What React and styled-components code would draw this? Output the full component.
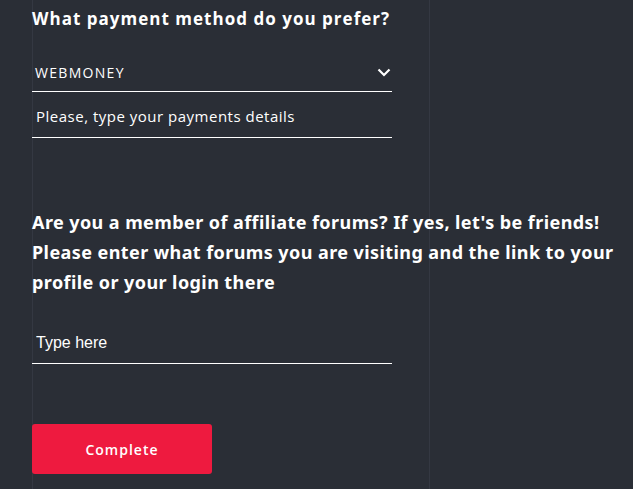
import React from "react";
import styled, { createGlobalStyle } from "styled-components";

const Global = createGlobalStyle`
  html, body { margin: 0; padding: 0; }
  body {
    background-color: #2a2e36;
    background-image:
      linear-gradient(to right, transparent 32px, #343842 32px, #343842 33px, transparent 33px),
      linear-gradient(to right, transparent 429px, #343842 429px, #343842 430px, transparent 430px);
    min-height: 489px;
    overflow: hidden;
    color: #fff;
    font-family: "Open Sans", "Liberation Sans", sans-serif;
  }
`;

const Page = styled.div`
  display: flex;
  flex-direction: column;
  align-items: flex-start;
  padding: 7px 0 0 32px;
  width: 601px;
`;

const Heading = styled.h2`
  margin: 0;
  font-family: "Open Sans", sans-serif;
  font-weight: 700;
  font-size: 17px;
  line-height: 24px;
  letter-spacing: 1.02px;
  color: #fff;
`;

const Field = styled.div`
  width: 360px;
  height: ${p => p.$h}px;
  margin-top: ${p => p.$mt}px;
  border-bottom: 1px solid #fff;
  display: flex;
  align-items: center;
  justify-content: space-between;
  box-sizing: border-box;
  padding: ${p => p.$pt || 0}px 1px 0 ${p => p.$pl}px;
`;

const SelectText = styled.span`
  font-family: "Open Sans", sans-serif;
  font-size: 14px;
  letter-spacing: 1.3px;
  color: #fff;
`;

const Input = styled.input`
  background: transparent;
  border: none;
  outline: none;
  padding: 0;
  width: 100%;
  color: #fff;
  font-family: ${p => p.$font};
  font-size: ${p => p.$fs}px;
  letter-spacing: ${p => p.$ls || 0}px;
  &::placeholder { color: #fff; opacity: 1; }
`;

const Question = styled.p`
  margin: 69px 0 0;
  font-family: "Noto Sans", sans-serif;
  font-weight: 700;
  font-size: 18px;
  line-height: 30px;
  letter-spacing: 0.42px;
  color: #fff;
`;

const Button = styled.button`
  margin-top: 60px;
  width: 180px;
  height: 50px;
  border: none;
  border-radius: 3px;
  background: #ee1a3f;
  color: #fff;
  font-family: "Open Sans", sans-serif;
  font-size: 14px;
  font-weight: 600;
  letter-spacing: 1px;
  cursor: pointer;
`;

const Chevron = () => (
  <svg width="14" height="9" viewBox="0 0 14 9">
    <path d="M1.5 1.5 L7 7 L12.5 1.5" fill="none" stroke="#fff" strokeWidth="2.2" />
  </svg>
);

export default function App() {
  return (
    <>
      <Global />
      <Page>
        <Heading>What payment method do you prefer?</Heading>
        <Field $h={44} $mt={17} $pl={3} $pt={6}>
          <SelectText>WEBMONEY</SelectText>
          <Chevron />
        </Field>
        <Field $h={46} $mt={0} $pl={4} $pt={2}>
          <Input $font={'"Open Sans", sans-serif'} $fs={15} $ls={0.5} placeholder="Please, type your payments details" />
        </Field>
        <Question>
          Are you a member of affiliate forums? If yes, let's be friends! Please enter what forums you are visiting and the link to your profile or your login there
        </Question>
        <Field $h={48} $mt={19} $pl={4} $pt={6}>
          <Input $font={'"Liberation Sans", Arial, sans-serif'} $fs={16} placeholder="Type here" />
        </Field>
        <Button>Complete</Button>
      </Page>
    </>
  );
}
